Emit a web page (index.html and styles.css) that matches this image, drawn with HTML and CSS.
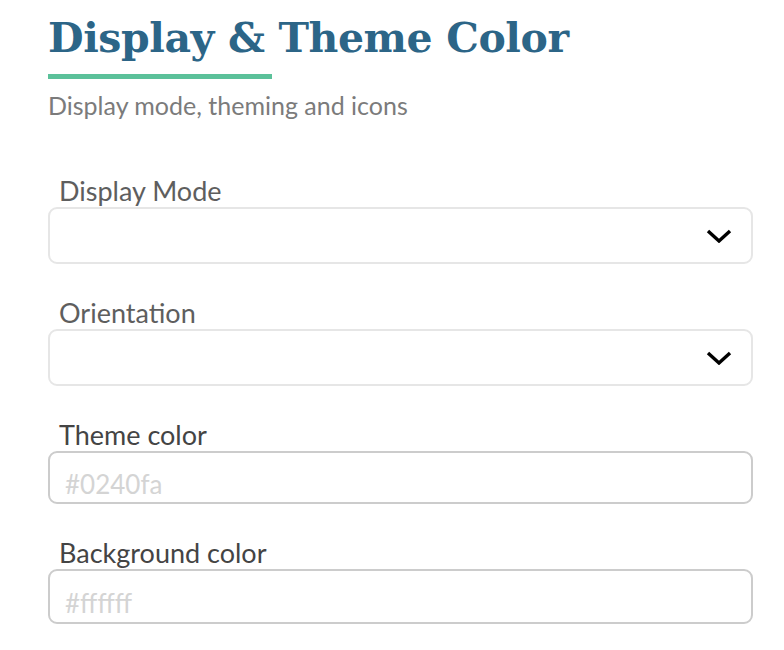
FILE: index.html
```html
<!DOCTYPE html>
<html lang="en">
<head>
<meta charset="utf-8">
<title>Display &amp; Theme Color</title>
<link rel="stylesheet" href="styles.css">
</head>
<body>
<main class="panel">
  <header class="panel-head">
    <h1 class="title">Display &amp; Theme Color</h1>
    <div class="title-bar"></div>
    <p class="subtitle">Display mode, theming and icons</p>
  </header>
  <form class="fields">
    <div class="field">
      <label class="label label-muted">Display Mode</label>
      <div class="select">
        <svg class="chevron" width="26" height="14" viewBox="0 0 26 14"><path d="M2 2 L13 12 L24 2" fill="none" stroke="#000" stroke-width="3.4" stroke-linecap="butt" stroke-linejoin="miter"/></svg>
      </div>
    </div>
    <div class="field">
      <label class="label label-muted">Orientation</label>
      <div class="select">
        <svg class="chevron" width="26" height="14" viewBox="0 0 26 14"><path d="M2 2 L13 12 L24 2" fill="none" stroke="#000" stroke-width="3.4" stroke-linecap="butt" stroke-linejoin="miter"/></svg>
      </div>
    </div>
    <div class="field">
      <label class="label">Theme color</label>
      <div class="input"><span class="placeholder">#0240fa</span></div>
    </div>
    <div class="field">
      <label class="label">Background color</label>
      <div class="input input-tall"><span class="placeholder">#ffffff</span></div>
    </div>
  </form>
</main>
</body>
</html>
```

FILE: styles.css
```css
html, body {
  margin: 0;
  padding: 0;
  background: #ffffff;
}

body {
  font-family: "Lato", "Open Sans", sans-serif;
}

.panel {
  width: 705px;
  padding: 0 0 0 48px;
  display: flex;
  flex-direction: column;
}

.panel-head {
  display: flex;
  flex-direction: column;
  align-items: flex-start;
}

.title {
  margin: 0;
  padding-top: 13px;
  font-family: "DejaVu Serif", "Liberation Serif", serif;
  font-weight: 700;
  font-size: 41px;
  line-height: 50px;
  color: #2c6587;
  letter-spacing: -0.4px;
}

.title-bar {
  width: 224px;
  height: 5px;
  margin-top: 11px;
  background: #5bc19a;
}

.subtitle {
  margin: 11px 0 0 0;
  font-size: 25px;
  line-height: 30px;
  color: #7b7b7b;
}

.fields {
  display: flex;
  flex-direction: column;
  margin-top: 55px;
}

.field {
  display: flex;
  flex-direction: column;
  margin-bottom: 33px;
}

.label {
  padding-left: 11px;
  font-size: 27px;
  line-height: 32px;
  color: #444444;
}

.label-muted {
  color: #5e5e5e;
}

.select {
  box-sizing: border-box;
  height: 57px;
  border: 2px solid #e6e6e6;
  border-radius: 9px;
  display: flex;
  align-items: center;
  justify-content: flex-end;
  padding-right: 19px;
}

.chevron {
  display: block;
}

.input {
  box-sizing: border-box;
  height: 53px;
  border: 2px solid #cccccc;
  border-radius: 9px;
  display: flex;
  align-items: center;
  padding: 12px 0 0 15px;
}

.input-tall {
  height: 55px;
}

.placeholder {
  font-size: 26px;
  line-height: 30px;
  color: #d4d4d4;
}
```
